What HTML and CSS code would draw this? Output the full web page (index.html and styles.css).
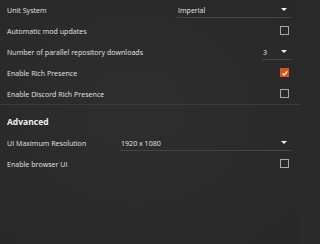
FILE: index.html
```html
<!DOCTYPE html>
<html>
<head>
<meta charset="utf-8">
<link rel="stylesheet" href="styles.css">
</head>
<body>
<div class="settings">
  <div class="group">
    <div class="row">
      <span class="label">Unit System</span>
      <div class="select select-unit"><span class="value">Imperial</span><span class="arrow"></span></div>
    </div>
    <div class="row">
      <span class="label">Automatic mod updates</span>
      <span class="check"></span>
    </div>
    <div class="row">
      <span class="label">Number of parallel repository downloads</span>
      <div class="select select-num"><span class="value">3</span><span class="arrow"></span></div>
    </div>
    <div class="row">
      <span class="label">Enable Rich Presence</span>
      <span class="check checked"><svg viewBox="0 0 8 8" width="8" height="8"><path d="M1.6 4.6 L3.2 5.9 L6.4 2.4" fill="none" stroke="#fff" stroke-width="1.3"/></svg></span>
    </div>
    <div class="row">
      <span class="label">Enable Discord Rich Presence</span>
      <span class="check"></span>
    </div>
  </div>
  <div class="group group-adv">
    <div class="heading">Advanced</div>
    <div class="row">
      <span class="label">UI Maximum Resolution</span>
      <div class="select select-res"><span class="value">1920 x 1080</span><span class="arrow"></span></div>
    </div>
    <div class="row">
      <span class="label">Enable browser UI</span>
      <span class="check"></span>
    </div>
  </div>
</div>
</body>
</html>
```
FILE: styles.css
```css
html, body {
  margin: 0;
  padding: 0;
}
html {
  background: #2a2a2a;
}
body {
  width: 300px;
  height: 244px;
  background: radial-gradient(ellipse at 45% 45%, #2e2e2e 0%, #2a2a2a 60%, #282828 100%);
  font-family: "Open Sans", "Noto Sans", sans-serif;
  font-size: 7.1px;
  color: #e2e2e2;
  overflow: hidden;
}
.settings {
  display: flex;
  flex-direction: column;
}
.group {
  padding: 0 8px 0 7px;
}
.group:first-child {
  border-bottom: 1px solid #3b3b3b;
  margin-top: -1px;
}
.row {
  height: 21px;
  display: flex;
  align-items: center;
  justify-content: space-between;
}
.label {
  white-space: nowrap;
}
.heading {
  font-weight: 700;
  font-size: 8.5px;
  color: #f0f0f0;
  height: 27px;
  padding-top: 5px;
  box-sizing: border-box;
  display: flex;
  align-items: center;
}
.select {
  height: 15px;
  margin-top: 1px;
  box-sizing: border-box;
  border-bottom: 1px solid #444;
  display: flex;
  align-items: center;
  justify-content: space-between;
  padding: 0 5px 0 1px;
}
.select .value {
  color: #e6e6e6;
}
.select-unit { width: 115px; }
.select-num { width: 30px; }
.select-res { width: 172px; }
.arrow {
  width: 0;
  height: 0;
  border-left: 3px solid transparent;
  border-right: 3px solid transparent;
  border-top: 3px solid #f2f2f2;
}
.check {
  width: 9px;
  height: 9px;
  box-sizing: border-box;
  border: 1px solid #a8a8a8;
  margin-right: 3px;
  display: flex;
}
.check.checked {
  border: none;
  width: 9px;
  height: 9px;
  background: #d8561c;
  align-items: center;
  justify-content: center;
}
```
